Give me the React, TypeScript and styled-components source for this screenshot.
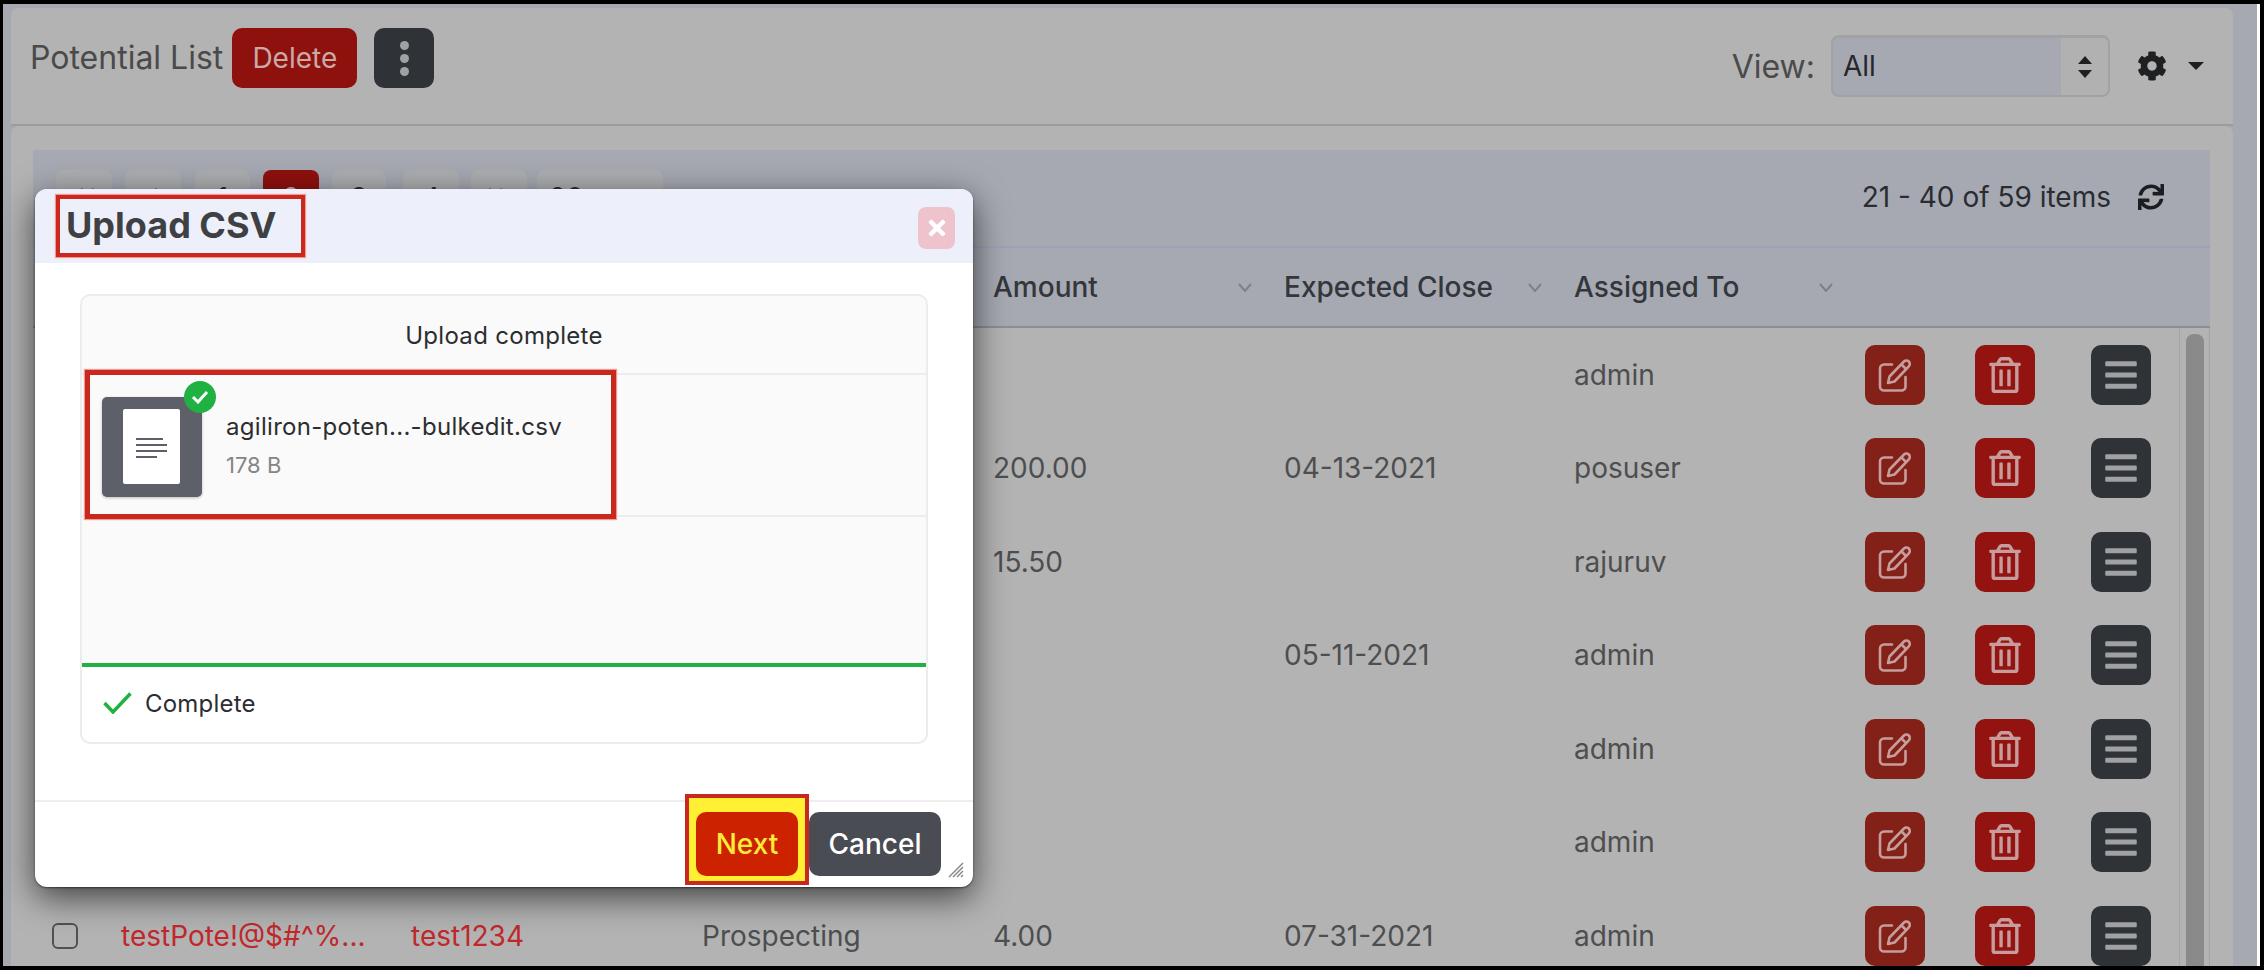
import React from "react";
import styled, { createGlobalStyle } from "styled-components";
import {
  FaAngleDoubleLeft,
  FaAngleDoubleRight,
  FaAngleLeft,
  FaBars,
  FaCog,
  FaRegTrashAlt,
  FaSync,
  FaTimes,
} from "react-icons/fa";

const GlobalStyle = createGlobalStyle`
  html, body {
    margin: 0;
    padding: 0;
    background: #000;
    font-family: Inter, "Liberation Sans", sans-serif;
  }
  * {
    box-sizing: border-box;
  }
`;

const Frame = styled.div`
  width: 2264px;
  height: 970px;
  border-style: solid;
  border-color: #000;
  border-width: 4px 4px 4px 3px;
  padding-right: 3px;
  background: #fff;
  overflow: hidden;
`;

const Page = styled.div`
  position: relative;
  height: 100%;
  padding: 4px 24px 0 8px;
  background: #a6a9b0;
  display: flex;
  flex-direction: column;
`;

const TopBar = styled.header`
  height: 118px;
  flex: none;
  padding: 20px 29px 0 19px;
  background: #b3b3b3;
  border-bottom: 2px solid #9c9c9c;
  border-radius: 8px 8px 0 0;
  display: flex;
  align-items: flex-start;
`;

const PageTitle = styled.h1`
  margin: 0 9px 0 0;
  height: 60px;
  font-size: 32px;
  font-weight: 400;
  line-height: 60px;
  color: #4a4a4a;
`;

const DeleteButton = styled.button`
  width: 125px;
  height: 60px;
  margin-right: 17px;
  border: 0;
  border-radius: 10px;
  background: #8f110e;
  color: #c9a9a8;
  font: 400 28px Inter, sans-serif;
`;

const DotsButton = styled.button`
  width: 60px;
  height: 60px;
  border: 0;
  border-radius: 10px;
  background: #2f3236;
  display: flex;
  flex-direction: column;
  align-items: center;
  justify-content: center;
  gap: 4px;
  span {
    width: 9px;
    height: 9px;
    border-radius: 50%;
    background: #a0a1a4;
  }
`;

const ViewGroup = styled.div`
  margin-left: auto;
  display: flex;
  align-items: center;
  height: 62px;
  margin-top: 7px;
`;

const ViewLabel = styled.span`
  margin-right: 16px;
  font-size: 32px;
  color: #4a4a4a;
`;

const SelectBox = styled.div`
  width: 279px;
  height: 62px;
  border: 2px solid #a1a2a5;
  border-top-width: 3px;
  border-radius: 8px;
  background: #a6a9b2;
  display: flex;
  overflow: hidden;
`;

const SelectValue = styled.span`
  flex: 1;
  padding-left: 10px;
  font-size: 28px;
  line-height: 56px;
  color: #25272b;
`;

const SelectArrows = styled.div`
  width: 47px;
  background: #b1b1b1;
  display: flex;
  align-items: center;
  justify-content: center;
`;

const GearGroup = styled.div`
  margin-left: 27px;
  display: flex;
  align-items: center;
  gap: 21px;
  color: #1f2022;
`;

const Caret = styled.i`
  width: 0;
  height: 0;
  border-left: 8px solid transparent;
  border-right: 8px solid transparent;
  border-top: 8px solid #1f2022;
`;

const ListCard = styled.section`
  flex: 1;
  min-height: 0;
  padding: 24px 23px 0 22px;
  background: #b3b3b3;
  border-radius: 8px 8px 0 0;
  display: flex;
  flex-direction: column;
`;

const Toolbar = styled.div`
  flex: none;
  height: 98px;
  padding: 20px 46px 0 23px;
  background: #a6a9b2;
  border-bottom: 2px solid #9da2b6;
  display: flex;
  align-items: flex-start;
  justify-content: space-between;
`;

const Pager = styled.div`
  display: flex;
`;

const PageButton = styled.span<{ $width: number; $gap: number; $active?: boolean }>`
  width: ${(p) => p.$width}px;
  height: 56px;
  margin-right: ${(p) => p.$gap}px;
  border-radius: 8px;
  background: ${(p) => (p.$active ? "#8f110e" : "#adaeb0")};
  color: ${(p) => (p.$active ? "#c9a9a8" : "#2a2c30")};
  font-size: 28px;
  line-height: 56px;
  display: flex;
  align-items: center;
  justify-content: center;
`;

const SizeButton = styled(PageButton)`
  justify-content: flex-start;
  padding-left: 12px;
`;

const ItemCount = styled.div`
  display: flex;
  align-items: center;
  gap: 27px;
  height: 54px;
  font-size: 28px;
  color: #2a2c30;
`;

const Grid = styled.div`
  display: grid;
  grid-template-columns: 76px 290px 291px 291px 291px 290px 291px 110px 116px 100px;
  align-items: center;
`;

const HeadRow = styled(Grid)`
  flex: none;
  height: 80px;
  background: #a6a9b2;
  border-bottom: 2px solid #8e8e92;
`;

const HeadCell = styled.div`
  padding: 0 20px 0 12px;
  display: flex;
  align-items: center;
  justify-content: space-between;
  font-size: 28px;
  font-weight: 500;
  color: #33363b;
`;

const TableBody = styled.div`
  flex: 1;
  min-height: 0;
  display: flex;
`;

const Rows = styled.div`
  width: 2146px;
  flex: none;
`;

const Row = styled(Grid)`
  height: 93.5px;
`;

const Cell = styled.div`
  padding-left: 12px;
  font-size: 28px;
  color: #4d4e50;
`;

const LinkCell = styled(Cell)`
  color: #c0282c;
`;

const CheckBox = styled.span`
  display: block;
  width: 26px;
  height: 26px;
  margin-left: 19px;
  border: 2px solid #4f5154;
  border-radius: 6px;
`;

const ActionButton = styled.button<{ $tone: "edit" | "remove" | "menu" }>`
  width: 60px;
  height: 60px;
  padding: 0;
  border: 0;
  border-radius: 10px;
  display: flex;
  align-items: center;
  justify-content: center;
  background: ${(p) =>
    p.$tone === "edit" ? "#832017" : p.$tone === "remove" ? "#931310" : "#2f3236"};
  color: ${(p) => (p.$tone === "menu" ? "#a0a1a4" : "#c69d9c")};
`;

const ScrollTrack = styled.div`
  flex: 1;
  display: flex;
  padding: 6px 5px 0 6px;
  border-left: 1px solid #a5a5a5;
  border-right: 1px solid #a5a5a5;
`;

const ScrollThumb = styled.div`
  flex: 1;
  border-radius: 8px 8px 0 0;
  background: #8a8a8a;
`;

const Modal = styled.div`
  position: absolute;
  left: 32px;
  top: 185px;
  width: 938px;
  height: 698px;
  border-radius: 12px;
  background: #fff;
  box-shadow: 0 1px 2px rgba(0, 0, 0, 0.5), 0 10px 34px rgba(0, 0, 0, 0.65);
  display: flex;
  flex-direction: column;
`;

const ModalHead = styled.div`
  flex: none;
  height: 74px;
  padding: 6px 18px 0 21px;
  background: #edf0fb;
  border-radius: 12px 12px 0 0;
  display: flex;
  align-items: flex-start;
  justify-content: space-between;
`;

const ModalTitle = styled.h2`
  margin: 0;
  width: 249px;
  height: 62px;
  padding-left: 6px;
  border: 4px solid #c8281e;
  box-shadow: 0 0 1px 1px #f39a92;
  font-size: 36px;
  font-weight: 700;
  line-height: 52px;
  color: #3f4043;
  white-space: nowrap;
`;

const CloseButton = styled.button`
  width: 37px;
  height: 42px;
  margin-top: 12px;
  padding: 0;
  border: 0;
  border-radius: 8px;
  background: #eec3cc;
  color: #fff;
  display: flex;
  align-items: center;
  justify-content: center;
`;

const ModalBody = styled.div`
  flex: 1;
  padding: 31px 45px 0;
`;

const UploadCard = styled.div`
  height: 450px;
  border: 2px solid #ececec;
  border-radius: 10px;
  background: #fafafa;
  display: flex;
  flex-direction: column;
`;

const UploadStatus = styled.div`
  height: 77px;
  flex: none;
  text-align: center;
  font-size: 24px;
  line-height: 80px;
  color: #2c2d30;
  letter-spacing: 0.3px;
`;

const FileRow = styled.div`
  position: relative;
  height: 144px;
  flex: none;
  padding: 22px 0 0 20px;
  border-top: 2px solid #ececec;
  border-bottom: 2px solid #ececec;
  display: flex;
`;

const FileMark = styled.div`
  position: absolute;
  left: 3px;
  top: -5px;
  width: 531px;
  height: 149px;
  border: 5px solid #c8281e;
  box-shadow: 0 0 1px 1px #f39a92;
`;

const FileThumb = styled.div`
  position: relative;
  width: 100px;
  height: 100px;
  flex: none;
  padding: 0 2px 2px 0;
  border-radius: 5px;
  background: #5d5f69;
  box-shadow: 0 1px 3px rgba(0, 0, 0, 0.25);
  display: flex;
  align-items: center;
  justify-content: center;
`;

const FilePaper = styled.div`
  width: 57px;
  height: 75px;
  padding-top: 4px;
  border-radius: 2px;
  background: #fff;
  display: flex;
  align-items: center;
  justify-content: center;
`;

const FileBadge = styled.span`
  position: absolute;
  right: -14px;
  top: -16px;
  width: 32px;
  height: 32px;
  border-radius: 50%;
  background: #1fb141;
  display: flex;
  align-items: center;
  justify-content: center;
`;

const FileInfo = styled.div`
  margin-left: 24px;
  padding-top: 14px;
`;

const FileName = styled.div`
  font-size: 24px;
  line-height: 32px;
  color: #2c2d30;
  letter-spacing: 0.3px;
`;

const FileSize = styled.div`
  margin-top: 8px;
  font-size: 22px;
  line-height: 28px;
  color: #858585;
`;

const UploadSpace = styled.div`
  flex: 1;
`;

const ProgressLine = styled.div`
  height: 4px;
  flex: none;
  background: #20b143;
`;

const UploadFoot = styled.div`
  height: 75px;
  flex: none;
  padding: 0 0 3px 21px;
  background: #fff;
  border-radius: 0 0 10px 10px;
  display: flex;
  align-items: center;
  gap: 13px;
  font-size: 24px;
  color: #2c2d30;
  letter-spacing: 0.2px;
`;

const ModalFoot = styled.div`
  position: relative;
  flex: none;
  height: 87px;
  padding: 0 32px 2px 0;
  border-top: 2px solid #eeeeee;
  display: flex;
  align-items: flex-end;
  justify-content: flex-end;
`;

const NextMark = styled.div`
  flex: none;
  padding: 14px 7px 5px;
  border: 4px solid #c8281e;
  background: #fff033;
`;

const FootButton = styled.button<{ $primary?: boolean }>`
  display: block;
  height: 64px;
  border: 0;
  border-radius: 10px;
  font: 500 28px Inter, sans-serif;
  width: ${(p) => (p.$primary ? 102 : 132)}px;
  margin-bottom: ${(p) => (p.$primary ? 0 : 9)}px;
  background: ${(p) => (p.$primary ? "#cd2200" : "#4a4c53")};
  color: ${(p) => (p.$primary ? "#fdeb3a" : "#fff")};
`;

const ResizeGrip = styled.svg`
  position: absolute;
  right: 9px;
  bottom: 9px;
`;

const SortChevron = () => (
  <svg width="14" height="9" viewBox="0 0 14 9">
    <path d="M1 1l6 7 6-7" fill="none" stroke="#7d8087" strokeWidth="2" />
  </svg>
);

const EditIcon = () => (
  <svg width="34" height="34" viewBox="0 0 34 34" fill="none" stroke="currentColor" strokeWidth="2.6" strokeLinecap="round" strokeLinejoin="round">
    <path d="M14 6.500H6a4 4 0 0 0-4 4v18a4 4 0 0 0 4 4h17.500a4 4 0 0 0 4-4V19" />
    <path d="M10 25l1.500-6.500L26 3.500a3.300 3.300 0 0 1 4.800 4.800L16.500 23.500z" />
    <path d="M23.500 6.500l4.500 4.500" />
  </svg>
);

type RowData = {
  check?: boolean;
  name?: string;
  reference?: string;
  stage?: string;
  amount?: string;
  close?: string;
  owner: string;
};

const rows: RowData[] = [
  { owner: "admin" },
  { amount: "200.00", close: "04-13-2021", owner: "posuser" },
  { amount: "15.50", owner: "rajuruv" },
  { close: "05-11-2021", owner: "admin" },
  { owner: "admin" },
  { owner: "admin" },
  {
    check: true,
    name: "testPote!@$#^%...",
    reference: "test1234",
    stage: "Prospecting",
    amount: "4.00",
    close: "07-31-2021",
    owner: "admin",
  },
];

const pages = [
  { key: "first", label: <FaAngleDoubleLeft size={30} />, width: 56, gap: 13 },
  { key: "prev", label: <FaAngleLeft size={30} />, width: 56, gap: 14 },
  { key: "1", label: "1", width: 55, gap: 13 },
  { key: "2", label: "2", width: 56, gap: 13, active: true },
  { key: "3", label: "3", width: 54, gap: 17 },
  { key: "4", label: "4", width: 56, gap: 12 },
  { key: "last", label: <FaAngleDoubleRight size={30} />, width: 56, gap: 10 },
];

export default function App() {
  return (
    <Frame>
      <GlobalStyle />
      <Page>
        <TopBar>
          <PageTitle>Potential List</PageTitle>
          <DeleteButton>Delete</DeleteButton>
          <DotsButton>
            <span />
            <span />
            <span />
          </DotsButton>
          <ViewGroup>
            <ViewLabel>View:</ViewLabel>
            <SelectBox>
              <SelectValue>All</SelectValue>
              <SelectArrows>
                <svg width="16" height="24" viewBox="0 0 16 24" fill="#1f2022">
                  <path d="M8 1l7 8H1z" />
                  <path d="M8 23L1 15h14z" />
                </svg>
              </SelectArrows>
            </SelectBox>
            <GearGroup>
              <FaCog size={30} />
              <Caret />
            </GearGroup>
          </ViewGroup>
        </TopBar>

        <ListCard>
          <Toolbar>
            <Pager>
              {pages.map((p) => (
                <PageButton key={p.key} $width={p.width} $gap={p.gap} $active={p.active}>
                  {p.label}
                </PageButton>
              ))}
              <SizeButton $width={126} $gap={0}>
                20
              </SizeButton>
            </Pager>
            <ItemCount>
              21 - 40 of 59 items
              <FaSync size={26} color="#1c1d20" />
            </ItemCount>
          </Toolbar>

          <HeadRow>
            <span />
            <span />
            <span />
            <span />
            <HeadCell>
              Amount
              <SortChevron />
            </HeadCell>
            <HeadCell>
              Expected Close
              <SortChevron />
            </HeadCell>
            <HeadCell>
              Assigned To
              <SortChevron />
            </HeadCell>
          </HeadRow>

          <TableBody>
            <Rows>
              {rows.map((r, i) => (
                <Row key={i}>
                  <div>{r.check && <CheckBox />}</div>
                  <LinkCell>{r.name}</LinkCell>
                  <LinkCell>{r.reference}</LinkCell>
                  <Cell>{r.stage}</Cell>
                  <Cell>{r.amount}</Cell>
                  <Cell>{r.close}</Cell>
                  <Cell>{r.owner}</Cell>
                  <Cell>
                    <ActionButton $tone="edit">
                      <EditIcon />
                    </ActionButton>
                  </Cell>
                  <Cell>
                    <ActionButton $tone="remove">
                      <FaRegTrashAlt size={36} />
                    </ActionButton>
                  </Cell>
                  <Cell>
                    <ActionButton $tone="menu">
                      <FaBars size={36} />
                    </ActionButton>
                  </Cell>
                </Row>
              ))}
            </Rows>
            <ScrollTrack>
              <ScrollThumb />
            </ScrollTrack>
          </TableBody>
        </ListCard>

        <Modal>
          <ModalHead>
            <ModalTitle>Upload CSV</ModalTitle>
            <CloseButton>
              <FaTimes size={24} />
            </CloseButton>
          </ModalHead>
          <ModalBody>
            <UploadCard>
              <UploadStatus>Upload complete</UploadStatus>
              <FileRow>
                <FileThumb>
                  <FilePaper>
                    <svg width="32" height="22" viewBox="0 0 32 22" stroke="#5d5f69" strokeWidth="2">
                      <path d="M1 2h27M1 8h31M1 14h31M1 20h21" />
                    </svg>
                  </FilePaper>
                  <FileBadge>
                    <svg width="18" height="14" viewBox="0 0 18 14" fill="none" stroke="#fff" strokeWidth="3">
                      <path d="M2 7l5 5 9-10" />
                    </svg>
                  </FileBadge>
                </FileThumb>
                <FileInfo>
                  <FileName>agiliron-poten...-bulkedit.csv</FileName>
                  <FileSize>178 B</FileSize>
                </FileInfo>
                <FileMark />
              </FileRow>
              <UploadSpace />
              <ProgressLine />
              <UploadFoot>
                <svg width="29" height="22" viewBox="0 0 29 22" fill="none" stroke="#20b143" strokeWidth="3.500">
                  <path d="M1.500 11l8.500 9L27.500 1.500" />
                </svg>
                Complete
              </UploadFoot>
            </UploadCard>
          </ModalBody>
          <ModalFoot>
            <NextMark>
              <FootButton $primary>Next</FootButton>
            </NextMark>
            <FootButton>Cancel</FootButton>
            <ResizeGrip width="16" height="16" viewBox="0 0 16 16" stroke="#8a8a8a" strokeWidth="1.500">
              <path d="M1 15L15 1M5 15L15 5M9 15l6-6M13 15l2-2" />
            </ResizeGrip>
          </ModalFoot>
        </Modal>
      </Page>
    </Frame>
  );
}
